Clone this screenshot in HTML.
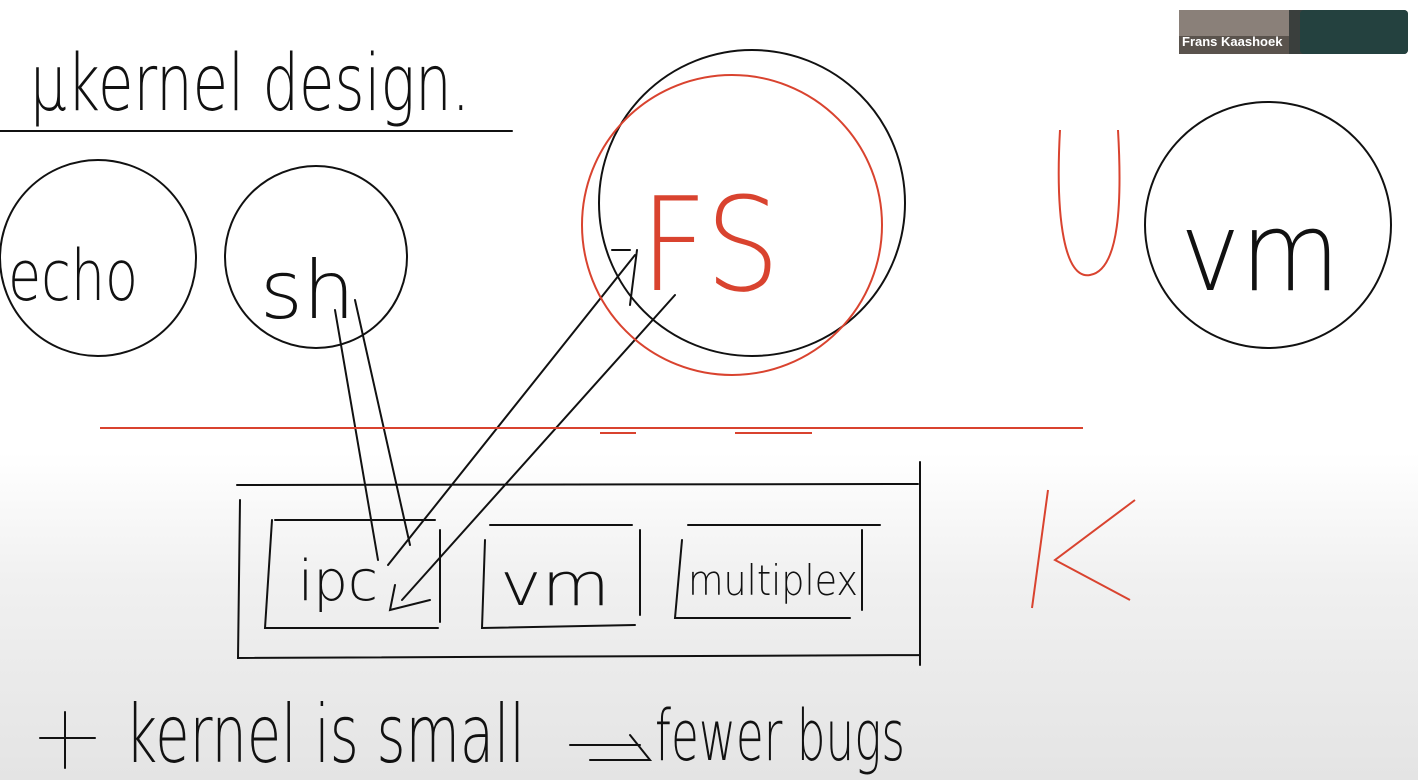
<!DOCTYPE html>
<html><head><style>
html,body{margin:0;padding:0;width:1418px;height:780px;overflow:hidden}
body{background:linear-gradient(180deg,#fff 0%,#fff 58%,#f0f0f0 75%,#e4e4e4 100%)}
svg{position:absolute;left:0;top:0}
.h{font-family:"DejaVu Sans","Liberation Sans",sans-serif;font-weight:200}
</style></head><body>
<svg width="1418" height="780" viewBox="0 0 1418 780">
<g fill="none" stroke="#111" stroke-width="2" stroke-linecap="round">
<line x1="0" y1="131" x2="512" y2="131"/>
<circle cx="98" cy="258" r="98"/>
<circle cx="316" cy="257" r="91"/>
<circle cx="752" cy="203" r="153"/>
<circle cx="1268" cy="225" r="123"/>
<path d="M237 485 L918 484 M240 500 L238 658 L920 655 M920 462 L920 665"/>
<path d="M275 520 L435 520 M272 520 L265 628 L438 628 M440 530 L440 622"/>
<path d="M490 525 L632 525 M485 540 L482 628 L635 625 M640 530 L640 615"/>
<path d="M688 525 L880 525 M682 540 L675 618 L850 618 M862 530 L862 610"/>
<path d="M335 310 L378 560 M355 300 L410 545"/>
<path d="M388 565 L635 255 M630 250 L612 250 M637 250 L630 305"/>
<path d="M675 295 L402 600 M395 585 L390 610 L430 600"/>
<line x1="40" y1="738" x2="95" y2="738"/><line x1="65" y1="712" x2="65" y2="768"/>
<path d="M570 745 L640 745 M590 760 L650 760 L630 735"/>
</g>
<g fill="none" stroke="#d9432f" stroke-width="2">
<circle cx="732" cy="225" r="150"/>
<line x1="100" y1="428" x2="1083" y2="428"/>
<line x1="600" y1="433" x2="636" y2="433"/><line x1="735" y1="433" x2="812" y2="433"/>
<path d="M1060 130 C1055 220 1065 280 1090 275 C1120 270 1122 200 1118 130"/>
<path d="M1048 490 L1032 608 M1135 500 L1055 560 L1130 600"/>
</g>
<g class="h" fill="#111">
<text x="30" y="110" font-size="78" textLength="440" lengthAdjust="spacingAndGlyphs">μkernel design.</text>
<text x="8" y="300" font-size="70" textLength="130" lengthAdjust="spacingAndGlyphs">echo</text>
<text x="260" y="318" font-size="80" textLength="95" lengthAdjust="spacingAndGlyphs">sh</text>
<text x="1180" y="290" font-size="110" textLength="160" lengthAdjust="spacingAndGlyphs">vm</text>
<text x="298" y="600" font-size="56" textLength="80" lengthAdjust="spacingAndGlyphs">ipc</text>
<text x="500" y="605" font-size="60" textLength="110" lengthAdjust="spacingAndGlyphs">vm</text>
<text x="688" y="595" font-size="42" textLength="170" lengthAdjust="spacingAndGlyphs">multiplex</text>
<text x="125" y="762" font-size="80" textLength="400" lengthAdjust="spacingAndGlyphs">kernel is small</text>
<text x="655" y="760" font-size="70" textLength="250" lengthAdjust="spacingAndGlyphs">fewer bugs</text>
</g>
<text class="h" x="640" y="290" font-size="130" fill="#d9432f" textLength="140" lengthAdjust="spacingAndGlyphs">FS</text>
<rect x="1179" y="10" width="229" height="44" rx="4" fill="#3a3f3d"/>
<rect x="1179" y="10" width="110" height="44" fill="#8a8079"/>
<rect x="1179" y="36" width="110" height="18" fill="#5a534d"/>
<rect x="1300" y="10" width="108" height="44" rx="4" fill="#24413f"/>
<text x="1182" y="46" font-family="Liberation Sans,sans-serif" font-weight="bold" font-size="13" fill="#fff">Frans Kaashoek</text>
</svg>
</body></html>
